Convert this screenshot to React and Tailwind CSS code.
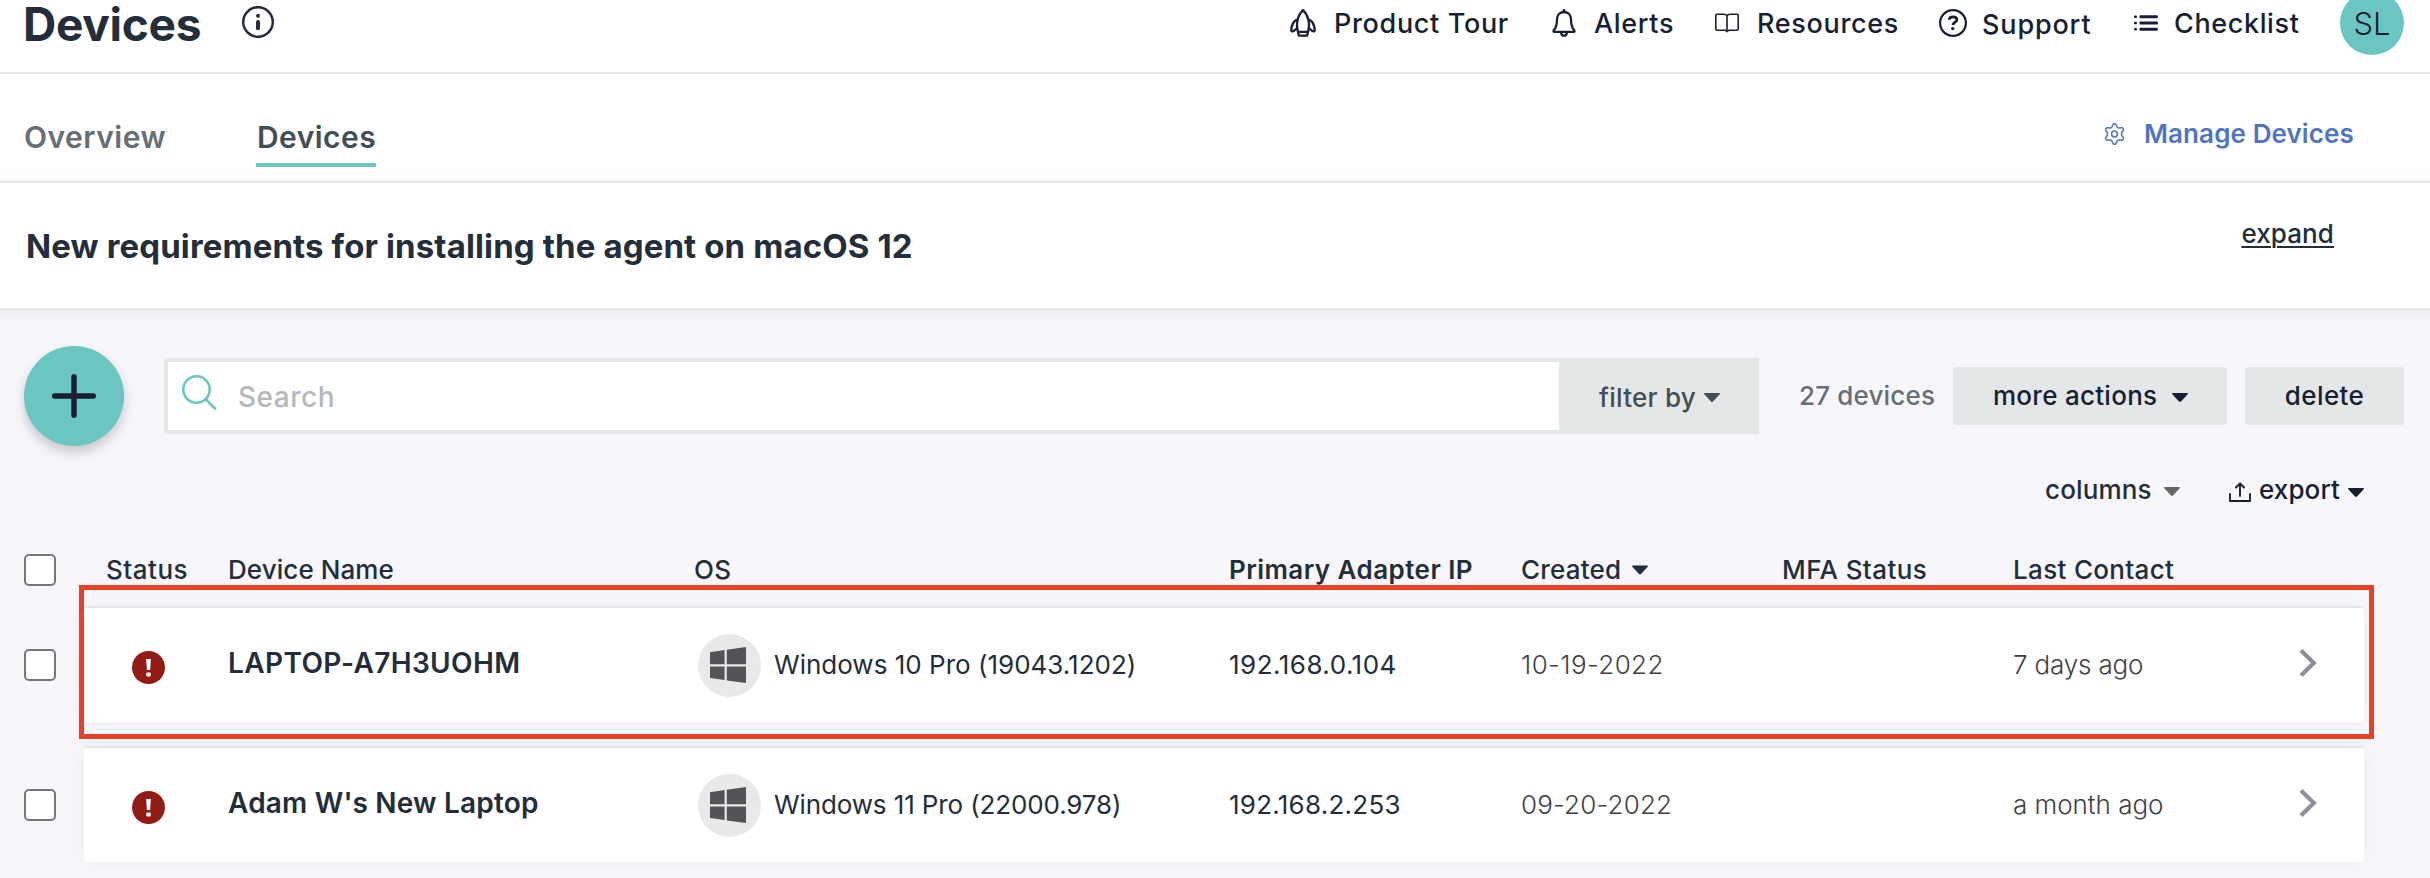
const Caret = ({ className }) => (
  <svg viewBox="0 0 16 9" className={className} fill="currentColor">
    <path d="M0.8 0h14.4c.7 0 1 .7.5 1.200L9 8.500c-.5.600-1.500.600-2 0L.3 1.200C-.200.700.100 0 .8 0z" />
  </svg>
);

const InfoIcon = () => (
  <svg viewBox="0 0 32 32" className="size-8" fill="none" stroke="#232e3a">
    <circle cx="16" cy="16" r="14.800" strokeWidth="2.500" />
    <circle cx="16" cy="9.800" r="2" fill="#232e3a" stroke="none" />
    <path d="M16 16v6.200" strokeWidth="4" strokeLinecap="round" />
  </svg>
);

const RocketIcon = () => (
  <svg viewBox="0 0 26 28" className="h-7 w-[26px]" fill="none" stroke="currentColor" strokeWidth="2.300" strokeLinejoin="round">
    <path d="M8 22.800C5.800 15.500 7.300 6.500 13 1.200C18.700 6.500 20.200 15.500 18 22.800z" />
    <path d="M6.900 10.500C3.400 12.500 1.300 17 1.300 21.500C1.300 22.300 2 22.500 2.800 22.300L4.200 21.700L7.600 18.800" />
    <path d="M19.100 10.500C22.600 12.500 24.700 17 24.700 21.500C24.700 22.300 24 22.500 23.200 22.300L21.800 21.700L18.400 18.800" />
    <path d="M8 22.800L8.800 26.600h8.400L18 22.800" />
  </svg>
);

const BellIcon = () => (
  <svg viewBox="0 0 24 28" className="h-7 w-6" fill="none" stroke="currentColor" strokeWidth="2.300" strokeLinejoin="round" strokeLinecap="round">
    <path d="M12 3C7.300 3 5 6.500 5 10.500C5 16.500 4.300 18.500 1.800 21.200C1.200 22 1.400 22.800 2.400 22.800H21.600C22.600 22.800 22.800 22 22.200 21.200C19.700 18.500 19 16.500 19 10.500C19 6.500 16.700 3 12 3z" />
    <path d="M12 1.400v1.500" strokeWidth="2.800" />
    <path d="M9 23.500c.3 2 1.400 3.200 3 3.200s2.700-1.200 3-3.200" />
  </svg>
);

const BookIcon = () => (
  <svg viewBox="0 0 24 20" className="h-5 w-6" fill="none" stroke="currentColor" strokeWidth="1.600" strokeLinejoin="round">
    <path d="M12 3C11.300 1.800 10.300 1.200 9 1.200H2C1.300 1.200.8 1.600.8 2.400V16C.8 16.800 1.300 17.300 2 17.300H10L12 18.300L14 17.300H22C22.700 17.300 23.200 16.800 23.200 16V2.400C23.200 1.600 22.700 1.200 22 1.200H15C13.700 1.200 12.700 1.800 12 3zM12 3V19.200" />
  </svg>
);

const HelpIcon = () => (
  <svg viewBox="0 0 28 28" className="size-7" fill="none" stroke="currentColor">
    <circle cx="14" cy="14" r="12.900" strokeWidth="2.200" />
    <path d="M10.200 10.800C10.200 8.700 11.800 7.900 14 7.900S17.900 8.900 17.900 10.900C17.900 13.200 14 13.200 14 16" strokeWidth="2.700" />
    <circle cx="13.800" cy="19.600" r="1.700" fill="currentColor" stroke="none" />
  </svg>
);

const ListIcon = () => (
  <svg viewBox="0 0 24 16" className="h-4 w-6" fill="currentColor">
    <rect x="0" y="0.500" width="3" height="2.400" rx="1" />
    <rect x="0" y="6.800" width="3" height="2.400" rx="1" />
    <rect x="0" y="13" width="3" height="2.400" rx="1" />
    <rect x="5.500" y="0.200" width="18.300" height="3" rx="0.800" />
    <rect x="5.500" y="6.500" width="18.300" height="3" rx="0.800" />
    <rect x="5.500" y="12.700" width="18.300" height="3" rx="0.800" />
  </svg>
);

const GearIcon = () => (
  <svg viewBox="0 0 21 22" className="h-[22px] w-[21px]" fill="none" stroke="currentColor" strokeWidth="1.500" strokeLinejoin="round">
    <path d="M8.900 1.600C9.300.500 11.700.500 12.100 1.600L13.200 4.300L14.800 5.100L17.600 4.700C18.900 4.600 20 6.500 19.200 7.500L17.600 9.700V12.300L19.200 14.500C20 15.500 18.900 17.400 17.600 17.300L14.800 16.900L13.200 17.700L12.100 20.400C11.700 21.500 9.300 21.500 8.900 20.400L7.800 17.700L6.200 16.900L3.400 17.300C2.100 17.400 1 15.500 1.800 14.500L3.400 12.300V9.700L1.800 7.500C1 6.500 2.100 4.600 3.400 4.700L6.200 5.100L7.800 4.300z" />
    <circle cx="10.500" cy="11" r="2.900" />
  </svg>
);

const SearchIcon = () => (
  <svg viewBox="0 0 35 36" className="h-9 w-[35px]" fill="none" stroke="#6bc5c1" strokeWidth="2.600" strokeLinecap="round">
    <circle cx="14.500" cy="14.500" r="13.200" />
    <path d="M24 24.500L33 33.500" />
  </svg>
);

const PlusIcon = () => (
  <svg viewBox="0 0 44 44" className="size-11" stroke="#181f33" strokeWidth="5.400" strokeLinecap="round">
    <path d="M22 2.700v38.600M2.700 22h38.600" />
  </svg>
);

const ExportIcon = () => (
  <svg viewBox="0 0 22 20" className="h-5 w-[22px]" fill="none" stroke="currentColor" strokeWidth="1.900" strokeLinejoin="round" strokeLinecap="round">
    <path d="M1 12v7h20v-7M11 14V1.500M7 5.500l4-4.200 4 4.200" />
  </svg>
);

const AlertIcon = () => (
  <svg viewBox="0 0 33 33" className="mt-[5px] ml-12 size-[33px]">
    <circle cx="16.500" cy="16.500" r="16.500" fill="#931b15" />
    <path d="M14.200 8h4.600l-.7 11h-3.200z" fill="#fff" />
    <rect x="14.300" y="21.500" width="4.400" height="4" rx="1" fill="#fff" />
  </svg>
);

const WindowsIcon = () => (
  <svg viewBox="0 0 36 36" className="mr-[3px] size-9" fill="#535458">
    <path d="M0 5.200L14.600 3v14.200H0zM16.800 2.700L36 0v17.200H16.800zM0 19.400h14.600v13.700L0 31zM16.800 19.400H36V36L16.800 33.400z" />
  </svg>
);

const ChevronIcon = () => (
  <svg viewBox="0 0 18 28" className="mt-[-4px] h-7 w-[18px]" fill="none" stroke="#8d909c" strokeWidth="4.200">
    <path d="M2 1.500L14.800 14L2 26.500" />
  </svg>
);

const Checkbox = () => (
  <div className="size-8 shrink-0 rounded-[5px] border-2 border-[#767676] bg-white" />
);

const navItems = [
  { label: "Product Tour", Icon: RocketIcon, item: "w-[262px]", icon: "w-11", text: "tracking-[0.66px] pt-[2px]" },
  { label: "Alerts", Icon: BellIcon, item: "w-[163px]", icon: "w-[42px]", text: "tracking-[0.66px] pt-[2px]" },
  { label: "Resources", Icon: BookIcon, item: "w-[224px]", icon: "w-[42px]", text: "tracking-[0.66px] pt-[2px]" },
  { label: "Support", Icon: HelpIcon, item: "w-[195px]", icon: "w-[43px]", text: "tracking-[0.85px] pt-[4px]" },
  { label: "Checklist", Icon: ListIcon, item: "w-[206px]", icon: "w-10", text: "tracking-[0.62px] pt-[2px]" },
];

const devices = [
  {
    name: "LAPTOP-A7H3UOHM",
    nameClass: "tracking-[0.38px]",
    os: "Windows 10 Pro (19043.1202)",
    osClass: "tracking-[0.01px]",
    ip: "192.168.0.104",
    ipClass: "tracking-[0.48px]",
    created: "10-19-2022",
    createdClass: "tracking-[0.41px]",
    contact: "7 days ago",
    contactClass: "tracking-[-0.17px]",
    highlighted: true,
  },
  {
    name: "Adam W's New Laptop",
    nameClass: "tracking-[0.18px]",
    os: "Windows 11 Pro (22000.978)",
    osClass: "tracking-[-0.12px]",
    ip: "192.168.2.253",
    ipClass: "tracking-[0.25px]",
    created: "09-20-2022",
    createdClass: "tracking-[0.17px]",
    contact: "a month ago",
    contactClass: "tracking-[-0.03px]",
    highlighted: false,
  },
];

function DeviceRow({ device }) {
  return (
    <div className="relative flex items-center pl-6">
      <div className="mt-[2px] mr-7">
        <Checkbox />
      </div>
      <div className="grid h-[116px] w-[2280px] grid-cols-[144px_465px_536px_292px_261px_231px_286px_65px] items-center rounded-[4px] border-t-2 border-[#e3e7e7] bg-white shadow-[0_0_20px_rgba(0,0,0,0.045)]">
        <AlertIcon />
        <div className={`mt-[-5px] text-[28px] leading-10 font-semibold ${device.nameClass}`}>{device.name}</div>
        <div className="flex items-center pl-[5px]">
          <div className="flex size-[63px] items-center justify-center rounded-full bg-[#e9e9e9]">
            <WindowsIcon />
          </div>
          <span className={`ml-[13px] ${device.osClass}`}>{device.os}</span>
        </div>
        <div className={device.ipClass}>{device.ip}</div>
        <div className={`font-light text-[#3f4145] ${device.createdClass}`}>{device.created}</div>
        <div />
        <div className={`font-light text-[#3f4145] ${device.contactClass}`}>{device.contact}</div>
        <ChevronIcon />
      </div>
      {device.highlighted && (
        <div className="pointer-events-none absolute top-[-21px] left-[79px] h-[154px] w-[2295px] border-5 border-[#e94125]" />
      )}
    </div>
  );
}

export default function App() {
  return (
    <div className="h-[878px] w-[2430px] overflow-hidden bg-[#f7f6fb] font-['Inter',sans-serif] text-[26px] leading-10 whitespace-nowrap text-[#232e3a]">
      <header className="flex h-[74px] items-start border-b-2 border-[#e3e7e7] bg-white">
        <div className="flex h-[46px] flex-1 items-center pl-[23px]">
          <h1 className="w-[219px] pt-[2px] text-[46px] leading-[46px] font-bold tracking-[-0.27px]">Devices</h1>
          <div className="-mt-[2px]">
            <InfoIcon />
          </div>
        </div>
        <nav className="flex h-[46px] items-center font-medium text-[#181f33]">
          {navItems.map(({ label, Icon, item, icon, text }) => (
            <div key={label} className={`flex h-10 items-center ${item}`}>
              <span className={`flex shrink-0 ${icon}`}>
                <Icon />
              </span>
              <span className={`text-[27px] ${text}`}>{label}</span>
            </div>
          ))}
        </nav>
        <div className="mt-[-9px] mr-[26px] flex size-16 items-center justify-center rounded-full bg-[#6bc5c1] pt-[1px] text-[31px] font-light text-[#181f33]">
          SL
        </div>
      </header>

      <section className="flex h-[109px] items-start border-b-2 border-[#e3e7e7] bg-linear-to-b from-white from-85% to-[#fafafa] pl-6">
        <div className="mt-[43px] w-[232px] text-[30px] font-semibold tracking-[0.5px] text-[#666e76]">Overview</div>
        <div className="mt-[43px] w-[120px] border-b-4 border-[#6bc5c1] pb-[6px] pl-[1px] text-[30px] font-semibold tracking-[0.45px] text-[#444e57]">Devices</div>
        <div className="mt-10 ml-auto flex w-[326px] items-center font-semibold tracking-[0.1px] text-[#4f74c4]">
          <GearIcon />
          <span className="ml-[19px]">Manage Devices</span>
        </div>
      </section>

      <section className="flex h-[127px] items-start border-b-2 border-[#e3e7e7] bg-white pl-[26px]">
        <h2 className="mt-[43px] text-[33px] font-bold tracking-[0.12px]">New requirements for installing the agent on macOS 12</h2>
        <a className="mt-[31px] mr-[96px] ml-auto font-medium tracking-[0.1px] underline decoration-2 underline-offset-[3px]">expand</a>
      </section>

      <main className="bg-linear-to-b from-[#f1f1f5] to-[#f7f6fb] to-[14px] pt-9">
        <div className="flex h-[100px] items-center pl-6 font-medium">
          <button className="flex size-[100px] items-center justify-center rounded-full bg-[#6bc5c1] shadow-[0_6px_12px_rgba(0,0,0,0.2)]">
            <PlusIcon />
          </button>
          <div className="ml-10 flex h-19 w-[1595px] rounded-l-[4px] bg-[#e3e7e7] py-1 pl-1">
            <div className="flex w-[1391px] items-center bg-white pl-[14px]">
              <div className="-mt-[6px]">
                <SearchIcon />
              </div>
              <span className="ml-[21px] pt-[2px] text-[28px] tracking-[0.5px] text-[#b5b9bc]">Search</span>
            </div>
            <div className="flex flex-1 items-center pt-[3px] pl-10 text-[#444e57]">
              <span className="w-[105px] tracking-[0.25px]">filter by</span>
              <Caret className="h-[9px] w-4" />
            </div>
          </div>
          <span className="w-[194px] pl-10 tracking-[0.17px] text-[#666e76]">27 devices</span>
          <button className="flex h-[58px] w-[274px] items-center rounded-[3px] bg-[#e3e7e7] pl-10 text-left text-[#181f33]">
            <span className="w-[179px] tracking-[0.27px]">more actions</span>
            <Caret className="mt-[3px] h-[9px] w-4" />
          </button>
          <button className="ml-[18px] h-[58px] w-[159px] rounded-[3px] bg-[#e3e7e7] tracking-[0.4px] text-[#181f33]">delete</button>
        </div>

        <div className="mt-6 flex h-10 items-center justify-end pr-[66px] font-medium">
          <span className="w-[119px] tracking-[0.15px]">columns</span>
          <Caret className="mt-[3px] h-[9px] w-4 text-[#666]" />
          <div className="ml-[49px] flex items-center text-[#181f33]">
            <span className="mt-1">
              <ExportIcon />
            </span>
            <span className="ml-2 w-[89px] tracking-[0.11px]">export</span>
            <Caret className="mt-[4px] h-[9px] w-4" />
          </div>
        </div>

        <div className="mt-10 flex h-10 items-center pl-6 font-medium">
          <Checkbox />
          <div className="ml-7 grid w-[2280px] grid-cols-[144px_466px_535px_292px_261px_231px_286px_65px] items-center">
            <span className="pl-[22px] tracking-[0.5px]">Status</span>
            <span className="tracking-[0.07px]">Device Name</span>
            <span className="tracking-[0.4px]">OS</span>
            <span className="font-semibold tracking-[0.44px]">Primary Adapter IP</span>
            <span className="flex items-center">
              <span className="w-[111px] tracking-[0.2px]">Created</span>
              <Caret className="h-[10px] w-4" />
            </span>
            <span className="tracking-[0.4px]">MFA Status</span>
            <span className="tracking-[0.33px]">Last Contact</span>
          </div>
        </div>

        <div className="mt-4 flex flex-col gap-6">
          {devices.map((device) => (
            <DeviceRow key={device.name} device={device} />
          ))}
        </div>
      </main>
    </div>
  );
}
